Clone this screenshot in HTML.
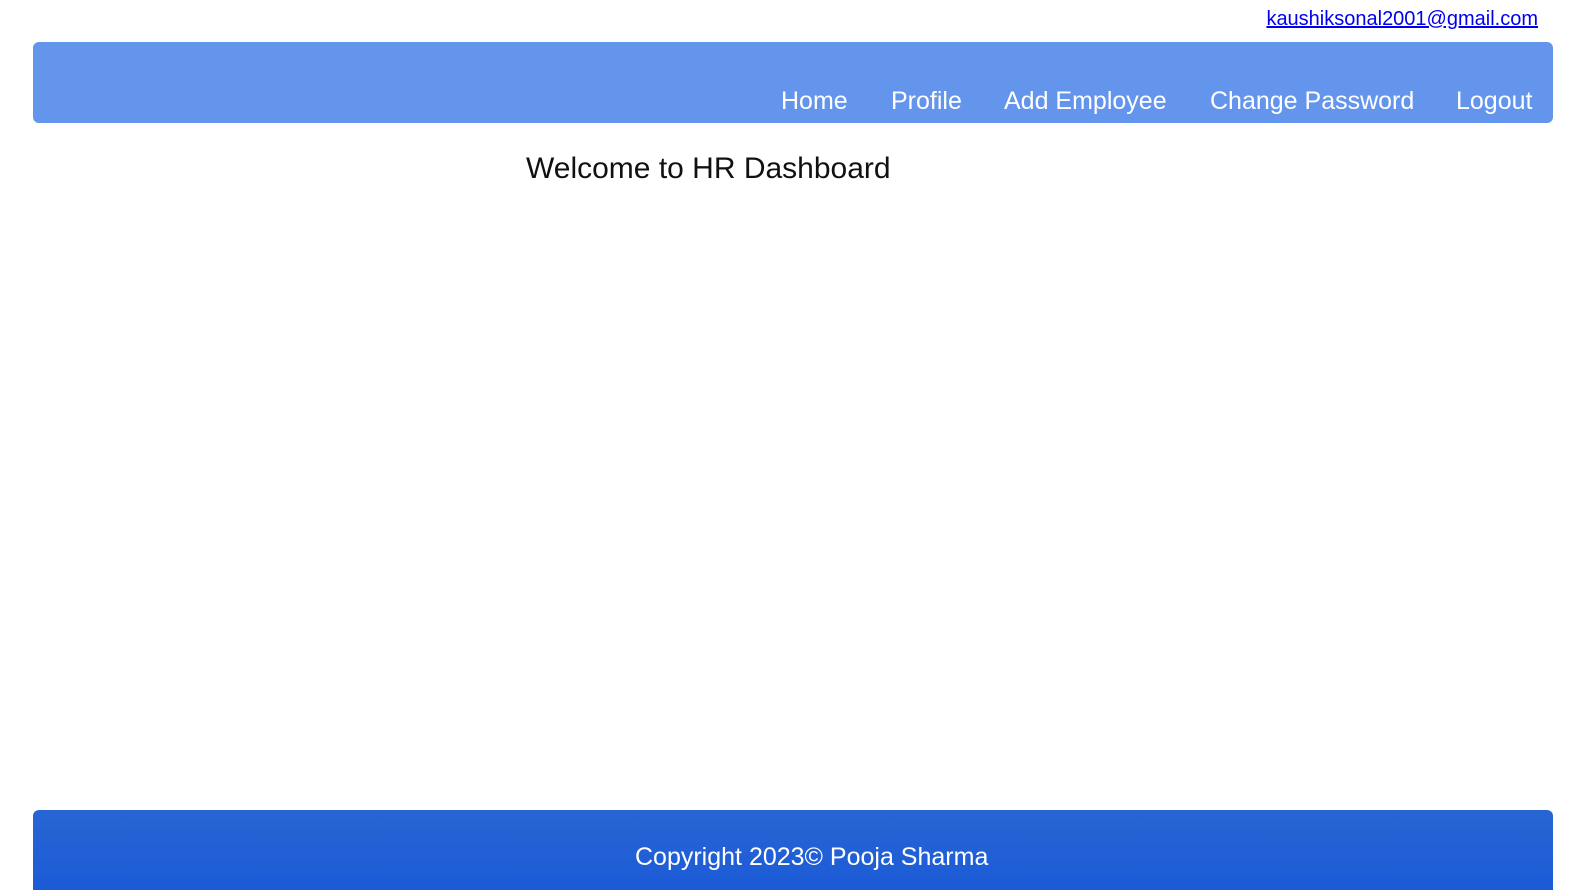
<!DOCTYPE html>
<html><head><style>
body{margin:0;width:1571px;height:886px;overflow:hidden;background:#fff;font-family:"Liberation Sans",sans-serif;position:relative}
.email{position:absolute;right:33px;top:8px;font-size:20px;color:#0000ee;text-decoration:underline}
.nav{position:absolute;left:33px;top:42px;width:1520px;height:81px;background:#6495ed;border-radius:6px}
.nav span{position:absolute;top:45px;font-size:25px;color:#fff}
h1{position:absolute;left:526px;top:152px;margin:0;font-weight:normal;font-size:30px;color:#111}
.foot{position:absolute;left:33px;top:810px;width:1520px;height:80px;background:linear-gradient(#2865d4,#1b5bd6);border-radius:6px 6px 0 0;color:#fff;font-size:25px}
.foot span{position:absolute;left:602px;top:33px}
</style></head><body>
<a class="email">kaushiksonal2001@gmail.com</a>
<div class="nav">
<span style="left:748px">Home</span>
<span style="left:858px">Profile</span>
<span style="left:971px">Add Employee</span>
<span style="left:1177px">Change Password</span>
<span style="left:1423px">Logout</span>
</div>
<h1>Welcome to HR Dashboard</h1>
<div class="foot"><span>Copyright 2023© Pooja Sharma</span></div>
</body></html>
